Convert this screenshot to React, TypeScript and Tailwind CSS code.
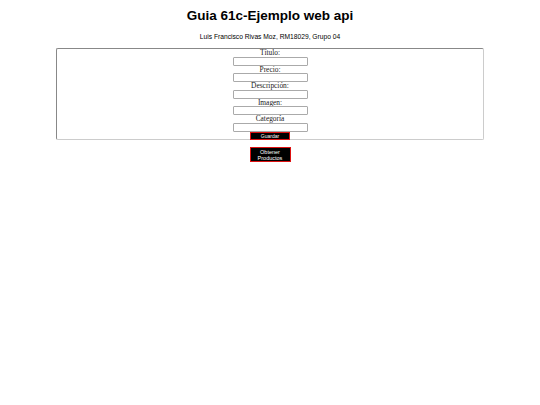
export default function App() {
  const fields = ['Título:', 'Precio:', 'Descripción:', 'Imagen:', 'Categoría'];
  return (
    <div className="min-h-[405px] w-[540px] bg-white">
      <h1 className="pt-[8px] text-center font-['Liberation_Sans',Arial,sans-serif] text-[13.5px] font-bold leading-[16px] text-black">
        Guia 61c-Ejemplo web api
      </h1>
      <p className="mt-[9px] text-center font-['Liberation_Sans',Arial,sans-serif] text-[6.7px] leading-[8px] text-black">
        Luis Francisco Rivas Moz, RM18029, Grupo 04
      </p>
      <form className="mx-[56px] mt-[7px] flex h-[92px] flex-col items-center rounded-[2px] border border-t-[#888] border-l-[#888] border-r-[#ccc] border-b-[#ccc]">
        {fields.map((f) => (
          <div key={f} className="flex flex-col items-center">
            <label className="h-[7.5px] font-['Liberation_Serif','Times_New_Roman',serif] text-[7.4px] font-normal leading-[8px] text-[#222]">
              {f}
            </label>
            <input
              type="text"
              className="h-[9px] w-[75px] rounded-[1px] border border-[#aaa] bg-white"
            />
          </div>
        ))}
        <button
          type="button"
          className="mt-[0.5px] h-[8px] w-[40px] border border-[#d11] bg-black font-['Liberation_Sans',Arial,sans-serif] text-[5px] leading-[6px] text-white"
        >
          Guardar
        </button>
      </form>
      <div className="mt-[7px] flex justify-center">
        <button
          type="button"
          className="h-[15px] w-[41px] border border-[#d11] bg-black font-['Liberation_Sans',Arial,sans-serif] text-[5.5px] leading-[6px] text-white"
        >
          Obtener
          <br />
          Productos
        </button>
      </div>
    </div>
  );
}
